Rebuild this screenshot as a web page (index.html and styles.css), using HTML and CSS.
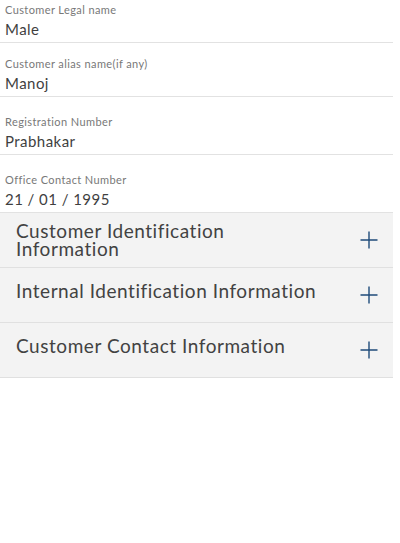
FILE: index.html
```html
<!DOCTYPE html>
<html lang="en">
<head>
<meta charset="utf-8">
<title>Customer form</title>
<link rel="stylesheet" href="styles.css">
</head>
<body>
<div class="page">
  <div class="field field-first">
    <div class="label">Customer Legal name</div>
    <div class="value">Male</div>
  </div>
  <div class="field field-second">
    <div class="label">Customer alias name(if any)</div>
    <div class="value">Manoj</div>
  </div>
  <div class="field">
    <div class="label">Registration Number</div>
    <div class="value">Prabhakar</div>
  </div>
  <div class="field">
    <div class="label">Office Contact Number</div>
    <div class="value">21 / 01 / 1995</div>
  </div>
  <div class="accordion">
    <div class="acc-item">
      <div class="acc-title acc-title-wrap">Customer Identification<br>Information</div>
      <svg class="plus" width="18" height="18" viewBox="0 0 18 18"><path d="M9 0.5V17.5M0.5 9H17.5" stroke="#1f4b7a" stroke-width="1.4" fill="none"/></svg>
    </div>
    <div class="acc-item">
      <div class="acc-title">Internal Identification Information</div>
      <svg class="plus" width="18" height="18" viewBox="0 0 18 18"><path d="M9 0.5V17.5M0.5 9H17.5" stroke="#1f4b7a" stroke-width="1.4" fill="none"/></svg>
    </div>
    <div class="acc-item">
      <div class="acc-title">Customer Contact Information</div>
      <svg class="plus" width="18" height="18" viewBox="0 0 18 18"><path d="M9 0.5V17.5M0.5 9H17.5" stroke="#1f4b7a" stroke-width="1.4" fill="none"/></svg>
    </div>
  </div>
</div>
</body>
</html>
```
FILE: styles.css
```css
html, body {
  margin: 0;
  padding: 0;
  background: #ffffff;
}
body {
  font-family: Lato, "Open Sans", "Liberation Sans", sans-serif;
}
.page {
  width: 393px;
}
.field {
  padding: 18px 5px 3px;
  border-bottom: 1px solid #e2e2e2;
}
.field-first {
  padding-top: 3px;
}
.field-second {
  padding-top: 14px;
}
.label {
  font-size: 11px;
  line-height: 14px;
  color: #787878;
  letter-spacing: 0.4px;
}
.value {
  margin-top: 2px;
  font-size: 15px;
  line-height: 20px;
  color: #3f3f3f;
  letter-spacing: 0.45px;
}
.accordion {
  display: flex;
  flex-direction: column;
}
.acc-item {
  height: 54px;
  display: flex;
  align-items: center;
  justify-content: space-between;
  padding: 0 16px;
  background: #f3f3f3;
  border-bottom: 1px solid #e0e0e0;
}
.acc-title {
  font-size: 19px;
  line-height: 18px;
  color: #424242;
  letter-spacing: 0.55px;
  padding-bottom: 8px;
}
.acc-title-wrap {
  padding-bottom: 0;
}
.plus {
  flex: none;
  margin-right: -1px;
}
```
